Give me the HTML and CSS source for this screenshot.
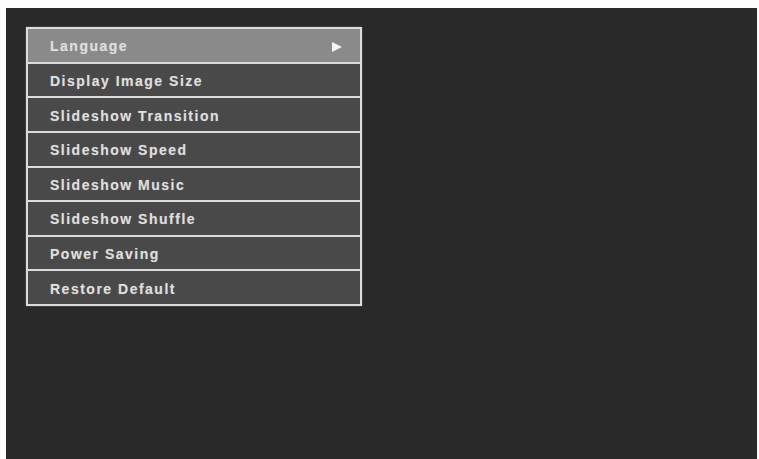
FILE: index.html
```html
<!DOCTYPE html>
<html lang="en">
<head>
    <meta charset="UTF-8">
    <meta name="viewport" content="width=device-width, initial-scale=1.0">
    <title>Setup Menu</title>
    <link rel="stylesheet" href="styles.css">
</head>
<body>
<div class="screen">
    <ul class="menu">
        <li class="item selected">
            <span>Language</span>
            <span class="arrow"></span>
        </li>
        <li class="item"><span>Display Image Size</span></li>
        <li class="item"><span>Slideshow Transition</span></li>
        <li class="item"><span>Slideshow Speed</span></li>
        <li class="item"><span>Slideshow Music</span></li>
        <li class="item"><span>Slideshow Shuffle</span></li>
        <li class="item"><span>Power Saving</span></li>
        <li class="item"><span>Restore Default</span></li>
    </ul>
</div>
</body>
</html>
```

FILE: styles.css
```css
body {
    margin: 0;
    background-color: #fdfdfd;
    font-family: "Liberation Sans", Arial, sans-serif;
}
.screen {
    margin: 8px 2px 0 6px;
    height: 451px;
    background-color: #292929;
    padding: 19px 0 0 20px;
    box-sizing: border-box;
}
.menu {
    list-style: none;
    margin: 0;
    padding: 0;
    width: 336px;
    height: 279px;
    box-sizing: border-box;
    border: 2px solid #dcdcdc;
    display: flex;
    flex-direction: column;
    box-shadow: 0 0 1px #999;
}
.item {
    flex: 1;
    display: flex;
    align-items: center;
    justify-content: space-between;
    padding: 2px 18px 0 22px;
    background-color: #494949;
    color: #dedede;
    font-size: 14px;
    font-weight: bold;
    letter-spacing: 1.5px;
    text-shadow: 0 0 1px rgba(255, 255, 255, 0.35);
}
.item + .item {
    border-top: 2px solid #dcdcdc;
}
.item.selected {
    background-color: #8a8a8a;
}
/* play-style arrow on the highlighted row */
.arrow {
    width: 0;
    height: 0;
    margin-top: 1px;
    border-top: 5px solid transparent;
    border-bottom: 5px solid transparent;
    border-left: 10px solid #f4f4f4;
}
```
